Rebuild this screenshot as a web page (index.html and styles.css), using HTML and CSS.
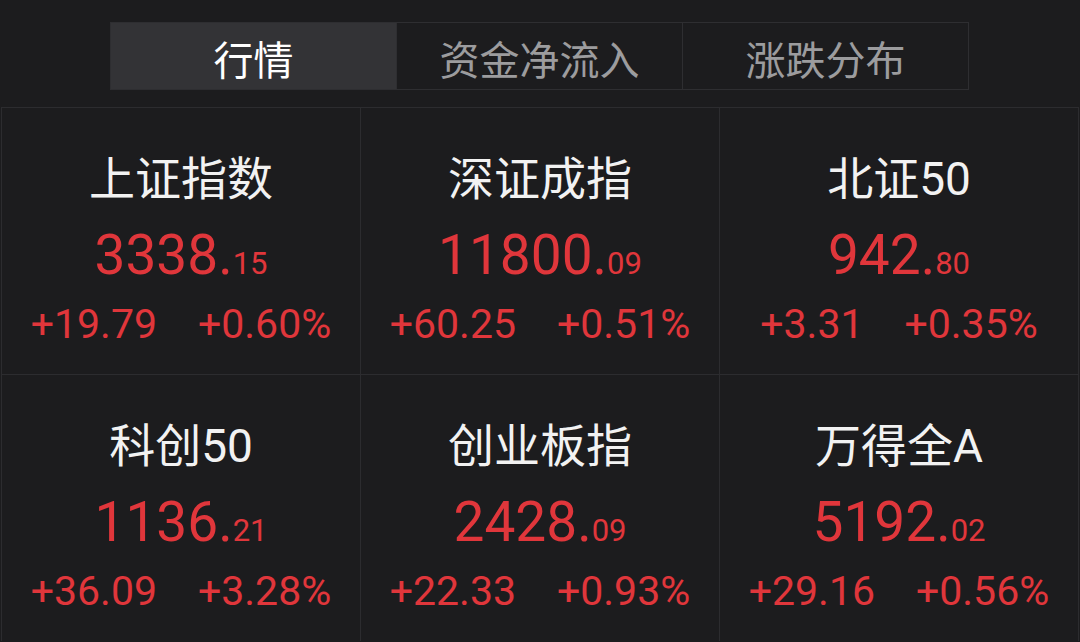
FILE: index.html
```html
<!DOCTYPE html>
<html lang="zh-CN">
<head>
<meta charset="utf-8">
<link rel="stylesheet" href="styles.css">
</head>
<body>
<div class="page">
  <div class="tabs">
    <div class="tab active">行情</div>
    <div class="tab">资金净流入</div>
    <div class="tab">涨跌分布</div>
  </div>
  <div class="grid">
    <div class="cell">
      <div class="name">上证指数</div>
      <div class="price"><span class="int">3338.</span><span class="dec">15</span></div>
      <div class="change"><span>+19.79</span><span>+0.60%</span></div>
    </div>
    <div class="cell">
      <div class="name">深证成指</div>
      <div class="price"><span class="int">11800.</span><span class="dec">09</span></div>
      <div class="change"><span>+60.25</span><span>+0.51%</span></div>
    </div>
    <div class="cell">
      <div class="name">北证50</div>
      <div class="price"><span class="int">942.</span><span class="dec">80</span></div>
      <div class="change"><span>+3.31</span><span>+0.35%</span></div>
    </div>
    <div class="cell">
      <div class="name">科创50</div>
      <div class="price"><span class="int">1136.</span><span class="dec">21</span></div>
      <div class="change"><span>+36.09</span><span>+3.28%</span></div>
    </div>
    <div class="cell">
      <div class="name">创业板指</div>
      <div class="price"><span class="int">2428.</span><span class="dec">09</span></div>
      <div class="change"><span>+22.33</span><span>+0.93%</span></div>
    </div>
    <div class="cell">
      <div class="name">万得全A</div>
      <div class="price"><span class="int">5192.</span><span class="dec">02</span></div>
      <div class="change"><span>+29.16</span><span>+0.56%</span></div>
    </div>
  </div>
</div>
</body>
</html>
```

FILE: styles.css
```css
html, body {
  margin: 0;
  padding: 0;
  background: #1c1c1e;
}
.page {
  width: 1080px;
  height: 642px;
  overflow: hidden;
  background: #1c1c1e;
  font-family: Roboto, "Noto Sans CJK SC", sans-serif;
}
.tabs {
  display: flex;
  margin: 22px 0 0 110px;
  width: 859px;
  height: 68px;
  border: 1px solid #2e2e31;
  box-sizing: border-box;
}
.tab {
  flex: 1;
  display: flex;
  align-items: center;
  justify-content: center;
  padding-top: 3px;
  box-sizing: border-box;
  font-family: "Noto Sans CJK SC", sans-serif;
  font-size: 40px;
  color: #9c9c9e;
  border-left: 1px solid #2e2e31;
}
.tab:first-child {
  border-left: none;
}
.tab.active {
  background: #333336;
  color: #ffffff;
}
.grid {
  margin: 17px 1px 0 1px;
  display: grid;
  grid-template-columns: repeat(3, 1fr);
  gap: 1px;
  background: #2c2c2f;
  border-top: 1px solid #2c2c2f;
  border-left: 1px solid #2c2c2f;
  border-right: 1px solid #2c2c2f;
}
.cell {
  background: #1c1c1e;
  height: 266px;
  display: flex;
  flex-direction: column;
  align-items: center;
  padding-top: 48px;
  box-sizing: border-box;
}
.name {
  font-family: Roboto, "Noto Sans CJK SC", sans-serif;
  font-size: 46px;
  line-height: 46px;
  color: #f2f2f2;
}
.price {
  margin-top: 26px;
  line-height: 54px;
  color: #e0363b;
  white-space: nowrap;
}
.price .int {
  font-size: 55px;
}
.price .dec {
  font-size: 31px;
}
.change {
  margin-top: 8px;
  display: flex;
  gap: 41px;
  font-size: 41px;
  line-height: 41px;
  color: #e0363b;
  white-space: nowrap;
}
```
